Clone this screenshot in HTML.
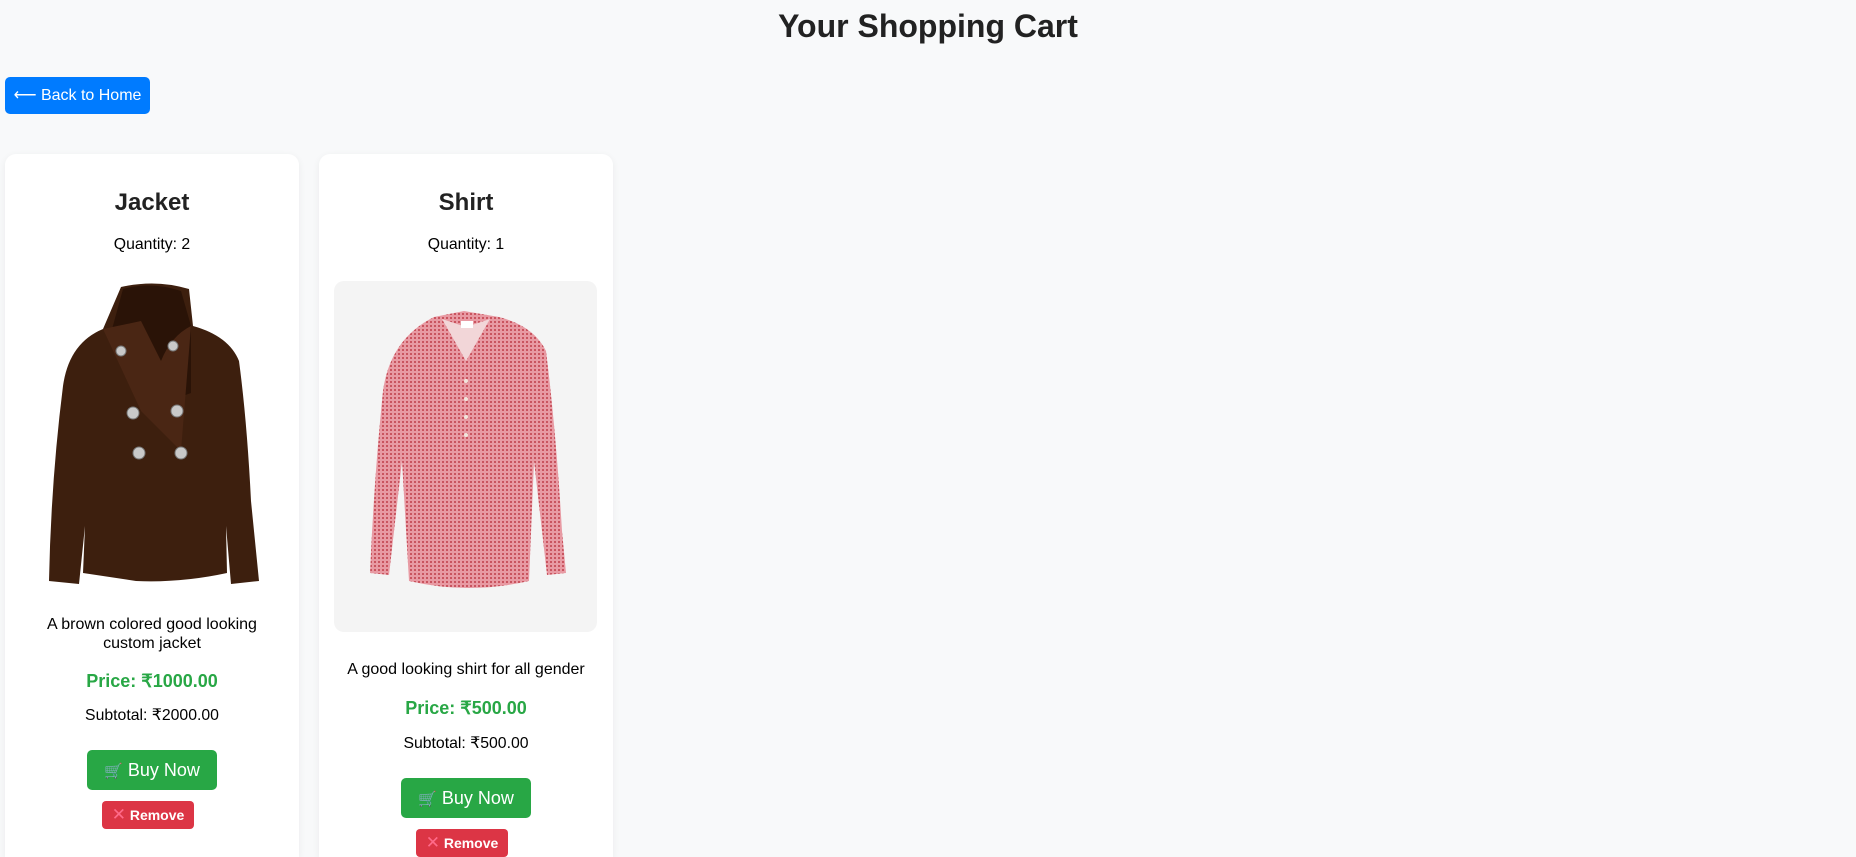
<!DOCTYPE html>
<html style="overflow:hidden;height:857px"><head><meta charset="utf-8">
<style>
*{margin:0;padding:0;box-sizing:border-box}
body{width:1856px;height:857px;overflow:hidden;background:#f8f9fa;font-family:"Liberation Sans",Arial,sans-serif;position:relative;color:#000}
.abs{position:absolute}
h1{position:absolute;left:0;width:1856px;top:6px;text-align:center;font-size:32px;font-weight:bold;color:#222;line-height:40px}
.back{left:5px;top:77px;width:145px;height:37px;background:#007bff;border-radius:5px;color:#fff;font-size:16px;line-height:37px;text-align:center}
.card{top:154px;width:294px;height:703px;background:#fff;border-radius:11px 11px 0 0;box-shadow:0 2px 8px rgba(0,0,0,0.06)}
.c{position:absolute;left:0;width:100%;text-align:center}
.t{font-size:24px;font-weight:bold;color:#222;line-height:28px}
.q{font-size:15.8px;line-height:20px}
.d{font-size:16px;line-height:19px}
.p{font-size:18px;font-weight:bold;color:#28a745;line-height:22px}
.buy{position:absolute;width:130px;height:40px;background:#28a745;border-radius:5px;color:#fff;font-size:18px;line-height:40px;text-align:center}
.rem{position:absolute;width:92px;height:28px;background:#dc3545;border-radius:4px;color:#fff;font-size:14px;line-height:28px;text-align:center;font-weight:bold}
.x{color:#ff6b8a;font-weight:normal;font-size:17px}
</style></head><body>
<h1>Your Shopping Cart</h1>
<div class="abs back">&#10229; Back to Home</div>

<div class="abs card" style="left:5px">
  <div class="c t" style="top:35px">Jacket</div>
  <div class="c q" style="top:81px">Quantity: 2</div>
  <svg class="abs" style="left:36px;top:127px" width="229" height="307" viewBox="0 0 229 307">
    <path d="M80,6 Q115,-2 148,8 L152,45 Q188,55 198,80 Q206,140 210,220 L218,300 L190,303 L185,245 L186,292 Q140,302 95,300 L42,292 L44,245 L38,303 L8,300 Q10,200 22,105 Q28,62 62,48 Z" fill="#3d1f0e"/>
    <path d="M82,8 L70,52 L100,130 L150,112 L150,45 L140,10 Q110,0 82,8Z" fill="#2a1307"/>
    <path d="M62,48 L100,130 L140,170 L150,45 Q130,55 120,80 L100,40 Z" fill="#4a2614"/>
    <g fill="#c9c9c9" stroke="#777" stroke-width="1">
      <circle cx="80" cy="70" r="5"/><circle cx="132" cy="65" r="5"/>
      <circle cx="92" cy="132" r="6"/><circle cx="136" cy="130" r="6"/>
      <circle cx="98" cy="172" r="6"/><circle cx="140" cy="172" r="6"/>
    </g>
  </svg>
  <div class="c d" style="top:461px">A brown colored good looking<br>custom jacket</div>
  <div class="c p" style="top:516px">Price: ₹1000.00</div>
  <div class="c q" style="top:552px">Subtotal: ₹2000.00</div>
  <div class="buy" style="left:82px;top:596px"><span style="font-size:15px">🛒</span> Buy Now</div>
  <div class="rem" style="left:97px;top:647px"><span class="x">✕</span> Remove</div>
</div>

<div class="abs card" style="left:319px">
  <div class="c t" style="top:35px">Shirt</div>
  <div class="c q" style="top:81px">Quantity: 1</div>
  <div class="abs" style="left:15px;top:127px;width:263px;height:351px;background:#f4f4f4;border-radius:10px">
    <svg width="263" height="351" viewBox="0 0 263 351">
      <defs><pattern id="g" width="4" height="4" patternUnits="userSpaceOnUse"><rect width="4" height="4" fill="#e89aa3"/><rect width="2" height="2" fill="#c9545f"/></pattern></defs>
      <path d="M100,36 L130,30 L165,36 Q200,45 212,70 Q222,150 228,250 L232,292 L213,294 L200,180 L195,300 Q135,314 75,300 L68,180 L55,294 L36,292 Q40,200 48,120 Q52,60 100,36Z" fill="url(#g)"/>
      <path d="M108,38 L132,80 L156,38 L132,46 Z" fill="#f2d6d8"/>
      <rect x="127" y="40" width="12" height="7" fill="#fff"/>
      <g fill="#f1e6dc"><circle cx="132" cy="100" r="2"/><circle cx="132" cy="118" r="2"/><circle cx="132" cy="136" r="2"/><circle cx="132" cy="154" r="2"/></g>
    </svg>
  </div>
  <div class="c d" style="top:506px">A good looking shirt for all gender</div>
  <div class="c p" style="top:543px">Price: ₹500.00</div>
  <div class="c q" style="top:580px">Subtotal: ₹500.00</div>
  <div class="buy" style="left:82px;top:624px"><span style="font-size:15px">🛒</span> Buy Now</div>
  <div class="rem" style="left:97px;top:675px"><span class="x">✕</span> Remove</div>
</div>
</body></html>
